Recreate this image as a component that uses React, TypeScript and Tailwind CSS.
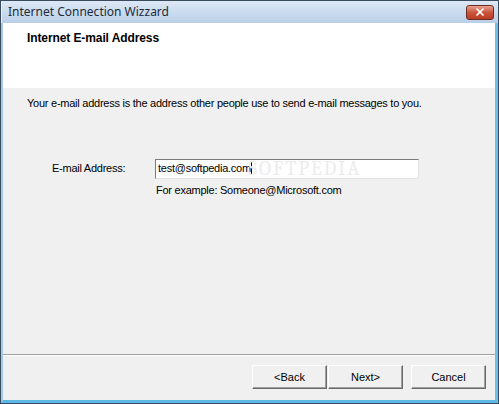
import { X } from 'lucide-react'

const font = { fontFamily: '"Liberation Sans", Arial, sans-serif' }

function ClassicButton({ label, className = '' }: { label: string; className?: string }) {
  return (
    <button
      className={`h-[24px] w-[75px] bg-[#f0f0f0] border border-t-white border-l-white border-r-[#696969] border-b-[#696969] shadow-[inset_-1px_-1px_0_#a0a0a0] text-[11px] text-black ${className}`}
    >
      {label}
    </button>
  )
}

export default function App() {
  return (
    <div className="w-[499px] h-[404px] flex flex-col border border-[#3b4b5e] bg-[#f0f0f0]" style={font}>
      <div className="h-[22px] flex items-center justify-between pl-[6px] pr-[4px] bg-gradient-to-b from-[#dde8f5] to-[#b9cfe8] border-l border-[#e9f0f8]">
        <span className="text-[12px] text-[#1e2a38]" style={{ fontFamily: '"Noto Sans", "Liberation Sans", sans-serif' }}>
          Internet Connection Wizzard
        </span>
        <div className="w-[28px] h-[15px] rounded-[3px] border border-[#6e2b25] bg-gradient-to-b from-[#e8a190] via-[#c9543c] to-[#b93c22] flex items-center justify-center">
          <X size={12} strokeWidth={3.5} className="text-white" />
        </div>
      </div>
      <div className="flex-1 flex flex-col border-l-2 border-l-[#a9c8e8] border-r-[3px] border-r-[#6cc0e6] border-b-[3px] border-b-[#5cb8e2]">
        <div className="h-[65px] bg-white pl-[24px] pt-[6px]">
          <div className="text-[12px] font-bold text-black tracking-[-0.1px]">Internet E-mail Address</div>
        </div>
        <div className="flex-1 flex flex-col bg-[#f0f0f0] tracking-[-0.25px]">
          <div className="pl-[24px] pt-[7px] text-[11px] text-black">
            Your e-mail address is the address other people use to send e-mail messages to you.
          </div>
          <div className="flex items-center mt-[47px] pl-[49px]">
            <span className="w-[103px] text-[11px] text-black">E-mail Address:</span>
            <div className="w-[264px] h-[20px] bg-white border border-t-[#7a7a7a] border-l-[#7a7a7a] border-r-[#e3e3e3] border-b-[#e3e3e3] flex items-center pl-[2px] text-[11px] text-black relative">
              <span>test@softpedia.com</span>
              <span className="w-px h-[13px] bg-black" />
              <span className="absolute left-[92px] top-0 text-[20px] leading-[18px] tracking-[2px] text-[#ececec] font-serif pointer-events-none">
                SOFTPEDIA
              </span>
            </div>
          </div>
          <div className="pl-[153px] mt-[3px] text-[11px] text-black">For example: Someone@Microsoft.com</div>
          <div className="flex-1" />
          <div className="border-t border-t-[#a0a0a0] border-b border-b-white" />
          <div className="h-[44px] flex items-start justify-end pt-[9px] pr-[9px] tracking-normal">
            <ClassicButton label="<Back" />
            <ClassicButton label="Next>" className="ml-[1px]" />
            <ClassicButton label="Cancel" className="ml-[8px]" />
          </div>
        </div>
      </div>
    </div>
  )
}
